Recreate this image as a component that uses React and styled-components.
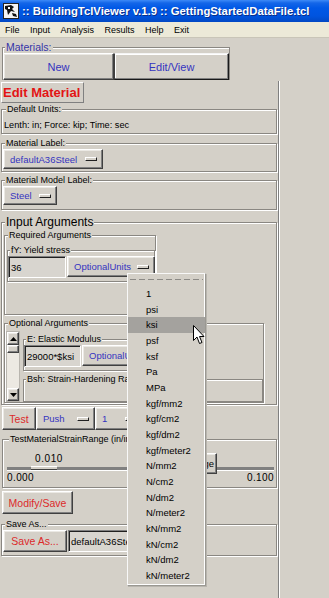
import styled, { createGlobalStyle } from "styled-components";

const GlobalStyle = createGlobalStyle`
  html, body {
    margin: 0;
    padding: 0;
    background: #d4d0c8;
  }
  * {
    box-sizing: border-box;
  }
`;

const UNITS = [
  "1", "psi", "ksi", "psf", "ksf", "Pa", "MPa", "kgf/mm2", "kgf/cm2", "kgf/dm2",
  "kgf/meter2", "N/mm2", "N/cm2", "N/dm2", "N/meter2", "kN/mm2", "kN/cm2",
  "kN/dm2", "kN/meter2",
];

const MENUS = ["File", "Input", "Analysis", "Results", "Help", "Exit"];

const App = () => (
  <>
    <GlobalStyle />
    <Window>
      <TitleBar>
        <AppIcon />
        <Title>:: BuildingTclViewer v.1.9 :: GettingStartedDataFile.tcl</Title>
      </TitleBar>

      <MenuBar>
        {MENUS.map((m) => (
          <MenuItem key={m}>{m}</MenuItem>
        ))}
      </MenuBar>

      <MaterialsGroup>
        <Legend $blue $size={10.5}>Materials:</Legend>
        <ButtonRow>
          <BigButton $w={111}>New</BigButton>
          <BigButton $w={115} $focus>Edit/View</BigButton>
        </ButtonRow>
      </MaterialsGroup>

      <Panel>
        <Heading>Edit Material</Heading>

        <Group $pad="4px 2px 2px">
          <Legend>Default Units:</Legend>
          <Text>Lenth: in; Force: kip; Time: sec</Text>
        </Group>

        <Group $m="3px 0 0" $pad="0 0 2px 1px">
          <Legend>Material Label:</Legend>
          <MenuButton $w={100} $h={20}>
            defaultA36Steel <Indicator />
          </MenuButton>
        </Group>

        <Group $m="2px 0 0" $pad="0 0 4px 1px">
          <Legend>Material Model Label:</Legend>
          <MenuButton $w={54} $h={19}>
            Steel <Indicator />
          </MenuButton>
        </Group>

        <Group $m="6px 0 0" $pad="0 0 1px 1px">
          <Legend $size={12} $lh={13}>Input Arguments</Legend>

          <Group $pad="0 0 32px 1px" $m="0 0 0 1px">
            <Legend>Required Arguments</Legend>
            <Group $w={148} $m="3px 0 0 1px" $pad="0 0 3px 0">
              <Legend>fY: Yield stress</Legend>
              <FieldRow>
                <Entry $w={58}>36</Entry>
                <MenuButton $w={88} $h={21}>
                  OptionalUnits <Indicator />
                </MenuButton>
              </FieldRow>
            </Group>
          </Group>

          <Group $m="2px 0 0 1px" $pad="0 0 0 1px">
            <Legend>Optional Arguments</Legend>
            <ScrollArea>
              <ScrollBar>
                <ArrowButton>
                  <svg width="7" height="4" viewBox="0 0 7 4">
                    <path d="M0 4 L3.5 0 L7 4 Z" fill="#000" />
                  </svg>
                </ArrowButton>
                <Thumb />
                <Trough />
                <ArrowButton>
                  <svg width="7" height="4" viewBox="0 0 7 4">
                    <path d="M0 0 L3.5 4 L7 0 Z" fill="#000" />
                  </svg>
                </ArrowButton>
              </ScrollBar>
              <Canvas>
                <Group $w={180} $m="2px 0 0" $pad="0 0 3px 0">
                  <Legend>E: Elastic Modulus</Legend>
                  <FieldRow>
                    <Entry $w={57}>29000*$ksi</Entry>
                    <MenuButton $w={88} $h={21}>
                      OptionalUnits <Indicator />
                    </MenuButton>
                  </FieldRow>
                </Group>
                <Group $w={240} $h={40} $m="2px 0 0" $pad="0">
                  <Legend>Bsh: Strain-Hardening Ratio</Legend>
                </Group>
              </Canvas>
            </ScrollArea>
          </Group>
        </Group>

        <ButtonRow $m="2px 0 0 1px">
          <Button $tone="red" $w={34} $h={23}>Test</Button>
          <MenuButton $w={59} $h={23}>
            Push <Indicator />
          </MenuButton>
          <MenuButton $w={48} $h={23}>
            1 <Indicator />
          </MenuButton>
        </ButtonRow>

        <Group $m="3px 0 0 1px" $pad="0 2px 4px 4px">
          <Legend>TestMaterialStrainRange (in/in)</Legend>
          <Scale>
            <ScaleValue>0.010</ScaleValue>
            <ScaleTrack>
              <ScaleSlider />
            </ScaleTrack>
            <ScaleEnds>
              <span>0.000</span>
              <span>0.100</span>
            </ScaleEnds>
            <RangeButton>Change Range</RangeButton>
          </Scale>
        </Group>

        <ButtonRow $m="3px 0 0 1px">
          <Button $tone="red" $w={71} $h={23}>Modify/Save</Button>
        </ButtonRow>

        <Group $m="4px 0 0" $pad="0 0 3px 1px">
          <Legend>Save As...</Legend>
          <FieldRow>
            <Button $tone="red" $w={64} $h={22}>Save As...</Button>
            <Entry $w={110}>defaultA36Steel</Entry>
          </FieldRow>
        </Group>
      </Panel>

      <UnitsMenu>
        <TearOff />
        {UNITS.map((u) => (
          <UnitItem key={u} $active={u === "ksi"}>
            {u}
          </UnitItem>
        ))}
      </UnitsMenu>

      <Pointer width="13" height="20" viewBox="0 0 13 20">
        <path
          d="M0.5 0.5 L0.5 15.5 L4 12 L6.5 18.5 L9 17.5 L6.5 11.5 L11 11.5 Z"
          fill="#fff"
          stroke="#000"
          strokeWidth="1"
          strokeLinejoin="miter"
        />
      </Pointer>
    </Window>
  </>
);

const AppIcon = () => (
  <IconBox>
    <svg width="16" height="16" viewBox="0 0 16 16">
      <rect x="0" y="0" width="16" height="16" fill="#f4f4f4" />
      <rect x="0.5" y="0.5" width="15" height="15" fill="none" stroke="#222" />
      <path d="M2 3 L8 2 L11 4 L9 6 L12 9 L8 8 L5 12 L4 7 L2 6 Z" fill="#111" />
      <path d="M9 10 L13 11 L14 14 L10 13 Z" fill="#111" />
      <rect x="5" y="4" width="2" height="2" fill="#fff" />
    </svg>
  </IconBox>
);

const Window = styled.div`
  position: relative;
  width: 329px;
  height: 598px;
  overflow: hidden;
  background: #d4d0c8;
  font-family: "Liberation Sans", Arial, sans-serif;
  font-size: 9px;
  color: #000;
`;

const TitleBar = styled.div`
  height: 22px;
  display: flex;
  align-items: center;
  gap: 3px;
  padding-left: 3px;
  background: linear-gradient(
    to bottom,
    #3d8af7 0px,
    #1466e8 3px,
    #0058e6 8px,
    #0054df 16px,
    #0248c4 22px
  );
`;

const IconBox = styled.div`
  width: 16px;
  height: 16px;
  display: flex;
`;

const Title = styled.div`
  color: #fff;
  font-weight: bold;
  font-size: 11.3px;
  white-space: nowrap;
  text-shadow: 1px 1px 0 #0a2f8a;
`;

const MenuBar = styled.div`
  height: 16px;
  display: flex;
  align-items: center;
  gap: 10.5px;
  padding-left: 5px;
  background: #ece9d8;
  border-bottom: 1px solid #c9c5b8;
`;

const MenuItem = styled.span`
  font-size: 9px;
  line-height: 16px;
`;

const MaterialsGroup = styled.fieldset`
  width: 227px;
  margin: 3px 0 0 2px;
  padding: 0;
  border: 1px solid #8a8782;
  border-bottom: none;
  box-shadow: inset 1px 1px 0 #fff;
  display: flex;
  flex-direction: column;
`;

const Legend = styled.legend`
  margin-left: 2px;
  padding: 0 1px;
  font-size: ${(p) => p.$size || 9}px;
  line-height: ${(p) => p.$lh || 12}px;
  color: ${(p) => (p.$blue ? "#3434a8" : "#000")};
  background: #d4d0c8;
  white-space: nowrap;
`;

const ButtonRow = styled.div`
  display: flex;
  margin: ${(p) => p.$m || "0"};
`;

const raised = `
  border: 1px solid;
  border-color: #ffffff #404040 #404040 #ffffff;
  box-shadow: inset -1px -1px 0 #808080, inset 1px 1px 0 #ebe9e4;
  background: #d4d0c8;
`;

const BigButton = styled.button`
  ${raised}
  width: ${(p) => p.$w}px;
  height: 27px;
  padding: 0;
  font-family: inherit;
  font-size: 11px;
  color: #3434c0;
  ${(p) =>
    p.$focus &&
    `
    border-color: #f4f4f4 #1a1a1a #1a1a1a #404040;
    box-shadow: inset -1px -1px 0 #808080, inset 1px 1px 0 #ffffff;
  `}
`;

const Button = styled.button`
  ${raised}
  width: ${(p) => p.$w}px;
  height: ${(p) => p.$h}px;
  padding: 0;
  font-family: inherit;
  font-size: 10.5px;
  color: ${(p) => (p.$tone === "red" ? "#dc2a2a" : "#3434c0")};
`;

const MenuButton = styled.div`
  ${raised}
  width: ${(p) => p.$w}px;
  height: ${(p) => p.$h}px;
  display: flex;
  align-items: center;
  justify-content: space-between;
  padding: 0 5px 0 6px;
  font-size: 9.5px;
  color: #3434c0;
  white-space: nowrap;
  overflow: hidden;
`;

const Indicator = styled.span`
  width: 12px;
  height: 4px;
  flex: none;
  border: 1px solid;
  border-color: #ffffff #202020 #202020 #ffffff;
  background: #d4d0c8;
`;

const Heading = styled.div`
  width: 83px;
  height: 21px;
  display: flex;
  align-items: center;
  padding-left: 1px;
  border: 1px solid;
  border-color: #ffffff #808080 #808080 #ffffff;
  font-size: 13px;
  font-weight: bold;
  color: #e31414;
  white-space: nowrap;
`;

const Panel = styled.div`
  width: 279px;
  height: 518px;
  margin-top: 1px;
  padding: 1px 1px 0 1px;
  display: flex;
  flex-direction: column;
  border-right: 1px solid #808080;
  box-shadow: 1px 0 0 #ffffff;
`;

const Group = styled.fieldset`
  width: ${(p) => (p.$w ? `${p.$w}px` : "auto")};
  ${(p) => p.$h && `height: ${p.$h}px;`}
  min-width: 0;
  margin: ${(p) => p.$m || "0"};
  padding: ${(p) => p.$pad || "0"};
  border: 1px solid #8a8782;
  box-shadow: inset 1px 1px 0 #ffffff, 1px 1px 0 #ffffff;
  display: flex;
  flex-direction: column;
  align-items: flex-start;
`;

const Text = styled.div`
  font-size: 9.2px;
  line-height: 12px;
`;

const FieldRow = styled.div`
  display: flex;
  align-items: stretch;
  gap: 1px;
`;

const Entry = styled.div`
  width: ${(p) => p.$w}px;
  height: 22px;
  display: flex;
  align-items: center;
  padding-left: 2px;
  border: 1px solid;
  border-color: #808080 #ffffff #ffffff #808080;
  box-shadow: inset 1px 1px 0 #202020;
  background: #d8d5cf;
  font-size: 9.5px;
  white-space: nowrap;
  overflow: hidden;
`;

const ScrollArea = styled.div`
  display: flex;
  gap: 3px;
  height: 73px;
  overflow: hidden;
  padding-top: 2px;
`;

const ScrollBar = styled.div`
  width: 14px;
  display: flex;
  flex-direction: column;
  background: #ece9e2;
  border: 1px solid #b8b5ae;
`;

const ArrowButton = styled.div`
  ${raised}
  height: 13px;
  display: flex;
  align-items: center;
  justify-content: center;
`;

const Thumb = styled.div`
  ${raised}
  height: 8px;
`;

const Trough = styled.div`
  flex: 1;
`;

const Canvas = styled.div`
  display: flex;
  flex-direction: column;
`;

const Scale = styled.div`
  position: relative;
  width: 100%;
  display: flex;
  flex-direction: column;
  padding-top: 9px;
`;

const ScaleValue = styled.div`
  margin-left: 28px;
  font-size: 10px;
  letter-spacing: 0.6px;
  line-height: 10px;
`;

const ScaleTrack = styled.div`
  position: relative;
  height: 4px;
  margin-top: 3px;
  background: #808080;
  border-bottom: 1px solid #ffffff;
`;

const ScaleSlider = styled.div`
  position: absolute;
  left: 24px;
  top: -1px;
  width: 26px;
  height: 4px;
  background: #d4d0c8;
  border-top: 1px solid #ffffff;
  border-bottom: 1px solid #404040;
`;

const ScaleEnds = styled.div`
  display: flex;
  justify-content: space-between;
  margin-top: 2px;
  font-size: 10px;
  letter-spacing: 0.4px;
  line-height: 10px;
`;

const RangeButton = styled.button`
  ${raised}
  position: absolute;
  right: 57px;
  top: 8px;
  width: 70px;
  height: 21px;
  padding: 0;
  font-family: inherit;
  font-size: 9.5px;
  color: #000;
  white-space: nowrap;
`;

const UnitsMenu = styled.div`
  position: absolute;
  left: 127px;
  top: 273px;
  width: 79px;
  display: flex;
  flex-direction: column;
  padding-bottom: 2px;
  background: #d4d0c8;
  border: 1px solid;
  border-color: #f8f8f8 #9a9892 #9a9892 #f8f8f8;
  box-shadow: inset -1px -1px 0 #ffffff, 1px 1px 0 #b8b5ae;
`;

const TearOff = styled.div`
  height: 12px;
  margin: 0 2px;
  border-top: 5px solid transparent;
  border-bottom: 6px solid transparent;
  background-image: repeating-linear-gradient(
    to right,
    #8c8a86 0 6px,
    transparent 6px 9px
  );
  background-clip: padding-box;
`;

const UnitItem = styled.div`
  height: 15.67px;
  line-height: 15.67px;
  padding-left: 18px;
  font-size: 9.5px;
  background: ${(p) => (p.$active ? "#a4a29e" : "transparent")};
`;

const Pointer = styled.svg`
  position: absolute;
  left: 193px;
  top: 325px;
`;

export default App;
